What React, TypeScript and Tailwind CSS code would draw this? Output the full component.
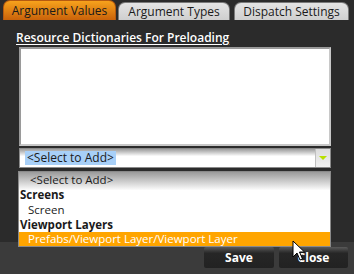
import React from 'react';

const font = { fontFamily: '"Open Sans", "Liberation Sans", sans-serif' };

function Tab({ label, active, className }: { label: string; active?: boolean; className?: string }) {
  return (
    <div
      className={
        'flex items-center justify-center rounded-t-[7px] text-[12px] leading-none ' +
        (active
          ? 'h-[20px] bg-gradient-to-b from-[#f7a21c] to-[#c9620a] text-[#1a1a1a] border border-[#b55a10] border-b-0 '
          : 'h-[18px] bg-gradient-to-b from-[#e4e4e4] to-[#cfcfcf] text-[#1a1a1a] border border-[#7a7a7a] border-b-0 ') +
        (className ?? '')
      }
    >
      {label}
    </div>
  );
}

function Cursor() {
  return (
    <svg className="absolute left-[292px] top-[240px]" width="14" height="22" viewBox="0 0 14 22">
      <path d="M1 1 L1 17 L5 13 L8 20 L10.5 19 L7.5 12 L12.5 12 Z" fill="#ffffff" stroke="#000000" strokeWidth="1" strokeLinejoin="round" />
    </svg>
  );
}

export default function App() {
  return (
    <div className="relative w-[354px] h-[274px] bg-[#2b2b2b] flex flex-col overflow-hidden" style={font}>
      {/* tabs */}
      <div className="flex items-end h-[20px] pl-[3px] gap-[2px]">
        <Tab label="Argument Values" active className="w-[113px]" />
        <Tab label="Argument Types" className="w-[112px]" />
        <Tab label="Dispatch Settings" className="w-[115px] ml-[2px]" />
      </div>

      {/* body */}
      <div className="flex-1 flex flex-col pl-[16px] pr-[23px] pt-[11px]">
        <div className="text-[12px] font-semibold text-white underline underline-offset-[2px] leading-[13px]">
          Resource Dictionaries For Preloading
        </div>
        <div className="ml-[3px] mt-[3px] h-[99px] bg-white border-2 border-[#9a9a9a] border-r-[#c8c8c8] border-b-[#c8c8c8]" />
        <div className="ml-[3px] mt-[2px] h-[20px] flex bg-gradient-to-b from-[#9c9c9c] via-white via-40% to-white border border-[#8a8a8a]">
          <div className="flex-1 flex items-center pl-[5px]">
            <span className="bg-[#a8d0f8] text-[#1a1a1a] text-[12px] leading-[14px] px-[2px]">&lt;Select to Add&gt;</span>
          </div>
          <div className="w-[15px] flex items-center justify-center bg-gradient-to-b from-[#dcdcdc] to-[#f2f2f2] border-l border-[#c0c0c0]">
            <div className="w-0 h-0 border-l-[4px] border-r-[4px] border-t-[4px] border-l-transparent border-r-transparent border-t-[#b8e000]" />
          </div>
        </div>
      </div>

      {/* footer */}
      <div className="h-[32px] bg-[#3b3b3b] flex justify-end gap-[5px] pt-[5px] pr-[6px]">
        <button className="w-[70px] h-[21px] bg-gradient-to-b from-[#5a5a5a] via-[#262626] via-30% to-[#222222] text-white text-[12px] font-bold rounded-[2px]">
          Save
        </button>
        <button className="w-[69px] h-[21px] bg-gradient-to-b from-[#5a5a5a] via-[#262626] via-30% to-[#222222] text-white text-[12px] font-bold rounded-[2px]">
          Close
        </button>
      </div>

      {/* open dropdown */}
      <div className="absolute left-[18px] top-[171px] w-[313px] h-[76px] bg-gradient-to-b from-[#9a9a9a] via-white via-25% to-white border border-[#8a8a8a] flex flex-col text-[11.5px] leading-[15px] text-[#1a1a1a]">
        <div className="pl-[11px] h-[15px]">&lt;Select to Add&gt;</div>
        <div className="pl-[1px] h-[15px] font-bold">Screens</div>
        <div className="pl-[9px] h-[15px]">Screen</div>
        <div className="pl-[1px] h-[15px] font-bold">Viewport Layers</div>
        <div className="pl-[9px] h-[14px] leading-[14px] bg-[#ffa500] text-white">Prefabs/Viewport Layer/Viewport Layer</div>
      </div>

      <Cursor />
    </div>
  );
}
